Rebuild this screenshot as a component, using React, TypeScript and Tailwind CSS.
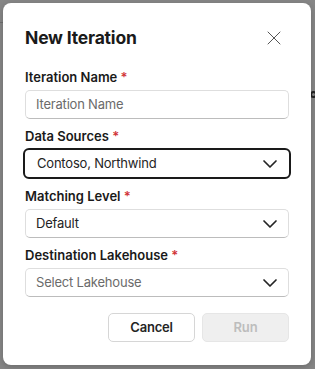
import React from 'react';
import { ChevronDown, X } from 'lucide-react';

function Label({ children }: { children: React.ReactNode }) {
  return (
    <label className="block text-[13px] leading-[18px] font-semibold text-[#1a1a1a] mb-[4px]">
      {children} <span className="text-[#d13438]">*</span>
    </label>
  );
}

function Select({ value, placeholder, focused }: { value?: string; placeholder?: string; focused?: boolean }) {
  return (
    <div
      className={
        focused
          ? 'flex items-center justify-between h-[31px] -mx-[2px] -my-[1px] pl-[12px] pr-[7px] rounded-[6px] border-2 border-[#1a1a1a] bg-white'
          : 'flex items-center justify-between h-[29px] pl-[10px] pr-[6px] rounded-[5px] border border-[#dedede] border-b-[#bcbcbc] bg-white'
      }
    >
      <span
        className={
          value
            ? 'text-[13px] tracking-[-0.2px] text-[#242424]'
            : 'text-[13px] tracking-[-0.2px] text-[#6b6b6b]'
        }
      >
        {value ?? placeholder}
      </span>
      <ChevronDown size={24} strokeWidth={1.7} className="text-[#242424]" />
    </div>
  );
}

export default function App() {
  return (
    <div
      className="relative w-[315px] h-[369px] bg-[#868686] p-[3px] overflow-hidden"
      style={{ fontFamily: 'Inter, "Liberation Sans", sans-serif' }}
    >
      {/* bits of the page behind the overlay */}
      <div className="absolute left-0 top-[22px] w-[3px] h-px bg-[#6e6e6e]" />
      <div className="absolute left-[310px] top-[91px] w-[7px] h-[7px] rounded-full border-2 border-[#222]" />

      <div className="relative h-[362px] w-[308px] bg-white rounded-[8px] px-[22px] pt-[23px] shadow-[0_2px_6px_rgba(0,0,0,0.2)]">
        <div className="flex items-center justify-between mb-[18px]">
          <h2 className="text-[17.5px] leading-[24px] font-bold tracking-[-0.2px] text-[#1a1a1a]">New Iteration</h2>
          <button className="text-[#555] mr-[3px]">
            <X size={24} strokeWidth={1} />
          </button>
        </div>

        <div className="mb-[8px]">
          <Label>Iteration Name</Label>
          <div className="flex items-center h-[29px] px-[10px] rounded-[5px] border border-[#dedede] border-b-[#bcbcbc] bg-white">
            <span className="text-[13px] tracking-[-0.2px] text-[#6b6b6b]">Iteration Name</span>
          </div>
        </div>

        <div className="mb-[9px]">
          <Label>Data Sources</Label>
          <Select value="Contoso, Northwind" focused />
        </div>

        <div className="mb-[8px]">
          <Label>Matching Level</Label>
          <Select value="Default" />
        </div>

        <div>
          <Label>Destination Lakehouse</Label>
          <Select placeholder="Select Lakehouse" />
        </div>

        <div className="flex justify-end gap-[7px] mt-[16px]">
          <button className="w-[87px] h-[29px] rounded-[5px] border border-[#d6d6d6] bg-white text-[13px] font-semibold tracking-[-0.2px] text-[#242424]">
            Cancel
          </button>
          <button className="w-[87px] h-[29px] rounded-[5px] bg-[#efefef] border border-[#e6e6e6] text-[13px] font-semibold tracking-[-0.2px] text-[#bdbdbd]">
            Run
          </button>
        </div>
      </div>
    </div>
  );
}
